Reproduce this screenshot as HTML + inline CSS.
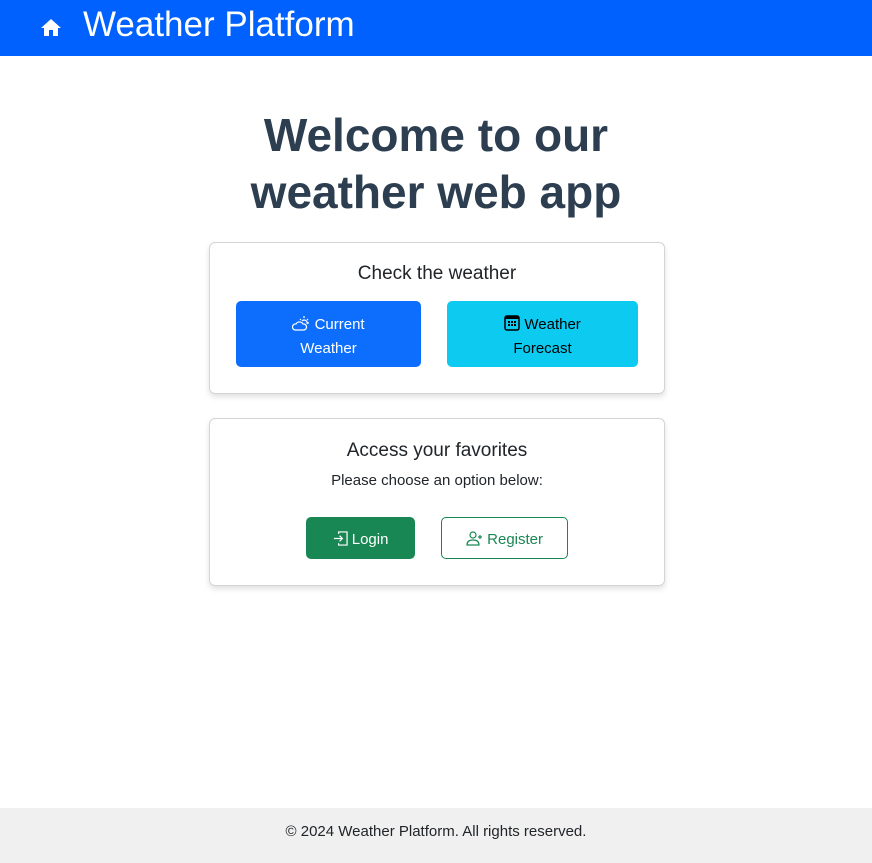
<!DOCTYPE html>
<html><head><meta charset="utf-8"><style>
*{box-sizing:border-box;margin:0;padding:0}
body{width:872px;height:863px;position:relative;font-family:"Liberation Sans",sans-serif;background:#fff;color:#212529;overflow:hidden}
.hdr{position:absolute;left:0;top:0;width:872px;height:56px;background:#0061fe}
.hdr .t{position:absolute;left:83px;top:5px;font-size:35px;color:#fff;line-height:40px}
.hdr svg{position:absolute;left:41px;top:19px}
h1{position:absolute;left:0;width:872px;top:107px;text-align:center;font-size:46px;line-height:57px;color:#2c3e50;font-weight:bold}
.card{position:absolute;left:209px;width:456px;border:1px solid #d5d5d5;border-radius:6px;box-shadow:0 3px 6px rgba(0,0,0,.12);background:#fff}
.ct{position:absolute;left:0;width:100%;text-align:center;font-size:19px}
.btn{position:absolute;border-radius:5px;text-align:center;font-size:15px;line-height:24px}
.foot{position:absolute;left:0;top:808px;width:872px;height:55px;background:#f0f0f0;text-align:center;font-size:15px;line-height:48px}
svg{vertical-align:-2px}
</style></head><body>
<div class="hdr"><svg width="20" height="17" viewBox="0 0 20 17"><path d="M10 0 L20 9 H17 V17 H12 V11 H8 V17 H3 V9 H0 Z" fill="#fff"/></svg><div class="t">Weather Platform</div></div>
<h1>Welcome to our<br>weather web app</h1>
<div class="card" style="top:242px;height:152px">
<div class="ct" style="top:20px">Check the weather</div>
<div class="btn" style="left:26px;top:58px;width:185px;height:66px;background:#0d6efd;color:#fff;padding-top:12px"><svg width="18" height="16" viewBox="0 0 18 16" fill="none" stroke="#fff" stroke-width="1.2"><path d="M3 15 H12 A3 3 0 0 0 11 9 A4 4 0 0 0 4 9 A3 3 0 0 0 3 15Z"/><path d="M10 6 A3 3 0 0 1 15 9"/><path d="M12 1V3M16 4L15 5M17 8H15M8 4L9 5"/></svg> Current<br>Weather</div>
<div class="btn" style="left:237px;top:58px;width:191px;height:66px;background:#0dcaf0;color:#000;padding-top:12px"><svg width="16" height="16" viewBox="0 0 16 16"><rect x="1" y="1" width="14" height="14" rx="2" fill="none" stroke="#000" stroke-width="1.5"/><rect x="1" y="1" width="14" height="3" fill="#000"/><g fill="#000"><rect x="4" y="6" width="2" height="2"/><rect x="7" y="6" width="2" height="2"/><rect x="10" y="6" width="2" height="2"/><rect x="4" y="9" width="2" height="2"/><rect x="7" y="9" width="2" height="2"/><rect x="10" y="9" width="2" height="2"/></g></svg> Weather<br>Forecast</div>
</div>
<div class="card" style="top:418px;height:168px">
<div class="ct" style="top:21px">Access your favorites</div>
<div class="ct" style="top:53px;font-size:15px">Please choose an option below:</div>
<div class="btn" style="left:96px;top:98px;width:109px;height:42px;background:#198754;color:#fff;line-height:46px"><svg width="15" height="15" viewBox="0 0 16 16" fill="none" stroke="#fff" stroke-width="1.3"><path d="M6 3V1H15V15H6V13"/><path d="M1 8H10M7 5L10 8L7 11"/></svg> Login</div>
<div class="btn" style="left:231px;top:98px;width:127px;height:42px;border:1px solid #198754;color:#198754;line-height:44px"><svg width="17" height="15" viewBox="0 0 17 15" fill="none" stroke="#198754" stroke-width="1.2"><circle cx="7" cy="4" r="3"/><path d="M1 14C1 10 4 9 7 9S13 10 13 14Z"/><path d="M14 4V8M12 6H16"/></svg> Register</div>
</div>
<div class="foot">© 2024 Weather Platform. All rights reserved.</div>
</body></html>
